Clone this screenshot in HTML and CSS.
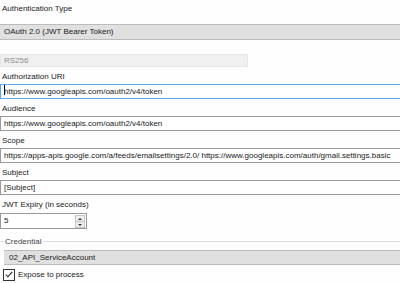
FILE: index.html
```html
<!DOCTYPE html>
<html lang="en">
	<head>
		<meta charset="UTF-8">
		<link rel="stylesheet" href="styles.css">
	</head>
	<body>
		<div class="form">
			<div class="label first">Authentication Type</div>
			<div class="combo">OAuth 2.0 (JWT Bearer Token)</div>
			<div class="disabledBox">RS256</div>

			<div class="label">Authorization URI</div>
			<div class="textBox focused"><span class="caret"></span>https://www.googleapis.com/oauth2/v4/token</div>

			<div class="label">Audience</div>
			<div class="textBox">https://www.googleapis.com/oauth2/v4/token</div>

			<div class="label">Scope</div>
			<div class="textBox">https://apps-apis.google.com/a/feeds/emailsettings/2.0/ https://www.googleapis.com/auth/gmail.settings.basic</div>

			<div class="label">Subject</div>
			<div class="textBox">[Subject]</div>

			<div class="label">JWT Expiry (in seconds)</div>
			<div class="numeric">
				<span class="numValue">5</span>
				<span class="spinner">
					<span class="spinBtn"><span class="arrowUp"></span></span>
					<span class="spinBtn"><span class="arrowDown"></span></span>
				</span>
			</div>

			<div class="groupBox">
				<div class="groupHead">
					<span class="groupLine short"></span>
					<span class="groupTitle">Credential</span>
					<span class="groupLine"></span>
				</div>
				<div class="combo inGroup">02_API_ServiceAccount</div>
			</div>

			<div class="checkRow">
				<span class="checkBox">
					<svg width="11" height="11" viewBox="0 0 11 11"><path d="M2 5.5 L4.3 8 L9 2.5" fill="none" stroke="#222" stroke-width="1.2"/></svg>
				</span>
				<span class="checkText">Expose to process</span>
			</div>
		</div>
	</body>
</html>
```

FILE: styles.css
```css
body {
	margin: 0;
	background-color: #fefefe;
	font-family: "Liberation Sans", Arial, sans-serif;
	font-size: 8px;
	color: #1a1a1a;
}

.form {
	display: flex;
	flex-direction: column;
	width: 400px;
	overflow: hidden;
}

/*---------------------------LABELS---------------------------*/
.label {
	height: 12px;
	line-height: 12px;
	padding-left: 2px;
	margin-top: 4px;
	margin-bottom: 1px;
	white-space: nowrap;
}

.label.first {
	margin-top: 3px;
	margin-bottom: 9px;
}

/*---------------------------BOXES---------------------------*/
.combo {
	box-sizing: border-box;
	height: 16px;
	line-height: 14px;
	padding-left: 4px;
	background-color: #e0e0e0;
	border-top: 1px solid #bcbcbc;
	border-bottom: 1px solid #bcbcbc;
	white-space: nowrap;
}

.disabledBox {
	box-sizing: border-box;
	width: 248px;
	height: 13px;
	line-height: 11px;
	margin-top: 14px;
	padding-left: 3px;
	background-color: #f0f0f0;
	border: 1px solid #e6e6e6;
	color: #8d8d8d;
}

.textBox {
	box-sizing: border-box;
	height: 15px;
	line-height: 13px;
	padding-left: 3px;
	background-color: #ffffff;
	border: 1px solid #9a9a9a;
	border-right: none;
	white-space: nowrap;
	overflow: hidden;
}

.textBox.focused {
	border-color: #5fa8e8;
}

.caret {
	display: inline-block;
	width: 1px;
	height: 10px;
	margin-right: -1px;
	vertical-align: -1px;
	background-color: #000;
}

/*---------------------------NUMERIC---------------------------*/
.numeric {
	box-sizing: border-box;
	display: flex;
	width: 87px;
	height: 16px;
	margin-top: 1px;
	background-color: #fff;
	border: 1px solid #9a9a9a;
}

.numValue {
	flex: 1;
	line-height: 14px;
	padding-left: 3px;
}

.spinner {
	display: flex;
	flex-direction: column;
	width: 10px;
	padding: 1px 1px 1px 0;
}

.spinBtn {
	flex: 1;
	display: flex;
	align-items: center;
	justify-content: center;
	background-color: #ececec;
	border: 1px solid #c6c6c6;
	margin-bottom: -1px;
}

.arrowUp {
	width: 0;
	height: 0;
	border-left: 2px solid transparent;
	border-right: 2px solid transparent;
	border-bottom: 2px solid #333;
}

.arrowDown {
	width: 0;
	height: 0;
	border-left: 2px solid transparent;
	border-right: 2px solid transparent;
	border-top: 2px solid #333;
}

/*---------------------------GROUP---------------------------*/
.groupBox {
	margin-top: 6px;
}

.groupHead {
	display: flex;
	align-items: center;
	height: 12px;
}

.groupLine {
	flex: 1;
	height: 1px;
	background-color: #dcdcdc;
}

.groupLine.short {
	flex: none;
	width: 4px;
}

.groupTitle {
	padding: 0 2px 0 1px;
	color: #444;
}

.combo.inGroup {
	margin-top: 3px;
	margin-left: 4px;
	height: 15px;
	line-height: 13px;
	padding-left: 5px;
}

/*---------------------------CHECKBOX---------------------------*/
.checkRow {
	display: flex;
	align-items: center;
	margin-top: 3px;
	padding-left: 3px;
	height: 13px;
}

.checkBox {
	box-sizing: border-box;
	display: flex;
	width: 12px;
	height: 12px;
	border: 1px solid #333;
	background-color: #fff;
	align-items: center;
	justify-content: center;
}

.checkText {
	margin-left: 3px;
}
```
